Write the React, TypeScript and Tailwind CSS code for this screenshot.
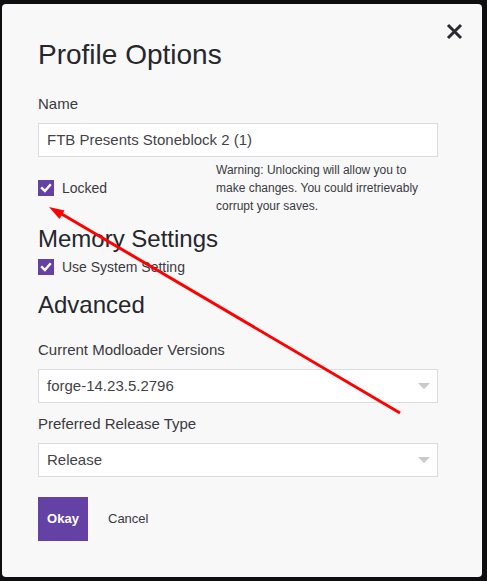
import React from 'react';

const font = { fontFamily: '"Liberation Sans", Arial, sans-serif' };

const CheckBox = ({ label }: { label: string }) => (
  <label className="flex items-center gap-2">
    <span className="flex h-4 w-4 items-center justify-center bg-[#6441a5]">
      <svg width="12" height="12" viewBox="0 0 12 12">
        <path d="M2 6.2 L4.9 9 L10 3.2" fill="none" stroke="#fff" strokeWidth="2.4" strokeLinecap="square" />
      </svg>
    </span>
    <span className="text-[14px] leading-4 text-[#3a3a3e]">{label}</span>
  </label>
);

const Select = ({ value }: { value: string }) => (
  <div className="flex h-[34px] w-[400px] items-center justify-between border border-[#dcdce0] bg-white pl-2 pr-[7px]">
    <span className="text-[15px] text-[#444448]">{value}</span>
    <svg width="12" height="6" viewBox="0 0 12 6">
      <path d="M0 0 H12 L6 6 Z" fill="#c9c9cd" />
    </svg>
  </div>
);

export default function App() {
  return (
    <div className="relative h-[581px] w-[487px] overflow-hidden bg-[#0e0e10] pl-[2px] pt-[4px]" style={font}>
      <div className="relative h-[573px] w-[480px] rounded-sm bg-[#f8f8f9] pl-9 pt-[35px]">
        <button className="absolute right-[19px] top-[19px] h-[17px] w-[17px]">
          <svg width="17" height="17" viewBox="0 0 17 17">
            <path d="M2 2 L15 15 M15 2 L2 15" stroke="#2a2a33" strokeWidth="3" />
          </svg>
        </button>

        <h1 className="text-[28px] leading-[32px] text-[#26262c]">Profile Options</h1>

        <div className="mt-[23px] text-[15px] leading-5 text-[#3a3a3e]">Name</div>
        <div className="mt-[9px] flex h-[34px] w-[400px] items-center border border-[#dcdce0] bg-white pl-2">
          <span className="text-[15px] text-[#444448]">FTB Presents Stoneblock 2 (1)</span>
        </div>

        <div className="mt-1 flex items-center">
          <div className="w-[178px]">
            <CheckBox label="Locked" />
          </div>
          <p className="w-[210px] text-[12px] leading-[18px] text-[#3a3a3e]">
            Warning: Unlocking will allow you to make changes. You could irretrievably corrupt your saves.
          </p>
        </div>

        <h2 className="mt-[10px] text-[24px] leading-[28px] text-[#26262c]">Memory Settings</h2>
        <div className="mt-[6px]">
          <CheckBox label="Use System Setting" />
        </div>

        <h2 className="mt-4 text-[24px] leading-[28px] text-[#26262c]">Advanced</h2>

        <div className="mt-[21px] text-[15px] leading-5 text-[#3a3a3e]">Current Modloader Versions</div>
        <div className="mt-[9px]">
          <Select value="forge-14.23.5.2796" />
        </div>

        <div className="mt-[11px] text-[15px] leading-5 text-[#3a3a3e]">Preferred Release Type</div>
        <div className="mt-[9px]">
          <Select value="Release" />
        </div>

        <div className="mt-5 flex items-center gap-5">
          <button className="h-[44px] w-[50px] bg-[#6441a5] text-[13px] font-bold text-white">Okay</button>
          <button className="text-[13px] text-[#3a3a3e]">Cancel</button>
        </div>
      </div>

      <svg className="pointer-events-none absolute left-0 top-0" width="487" height="581">
        <line x1="400" y1="413" x2="60" y2="213" stroke="#ff0000" strokeWidth="3" />
        <path d="M49 207 L59.5 219 L64.5 210.5 Z" fill="#ff0000" />
      </svg>
    </div>
  );
}
